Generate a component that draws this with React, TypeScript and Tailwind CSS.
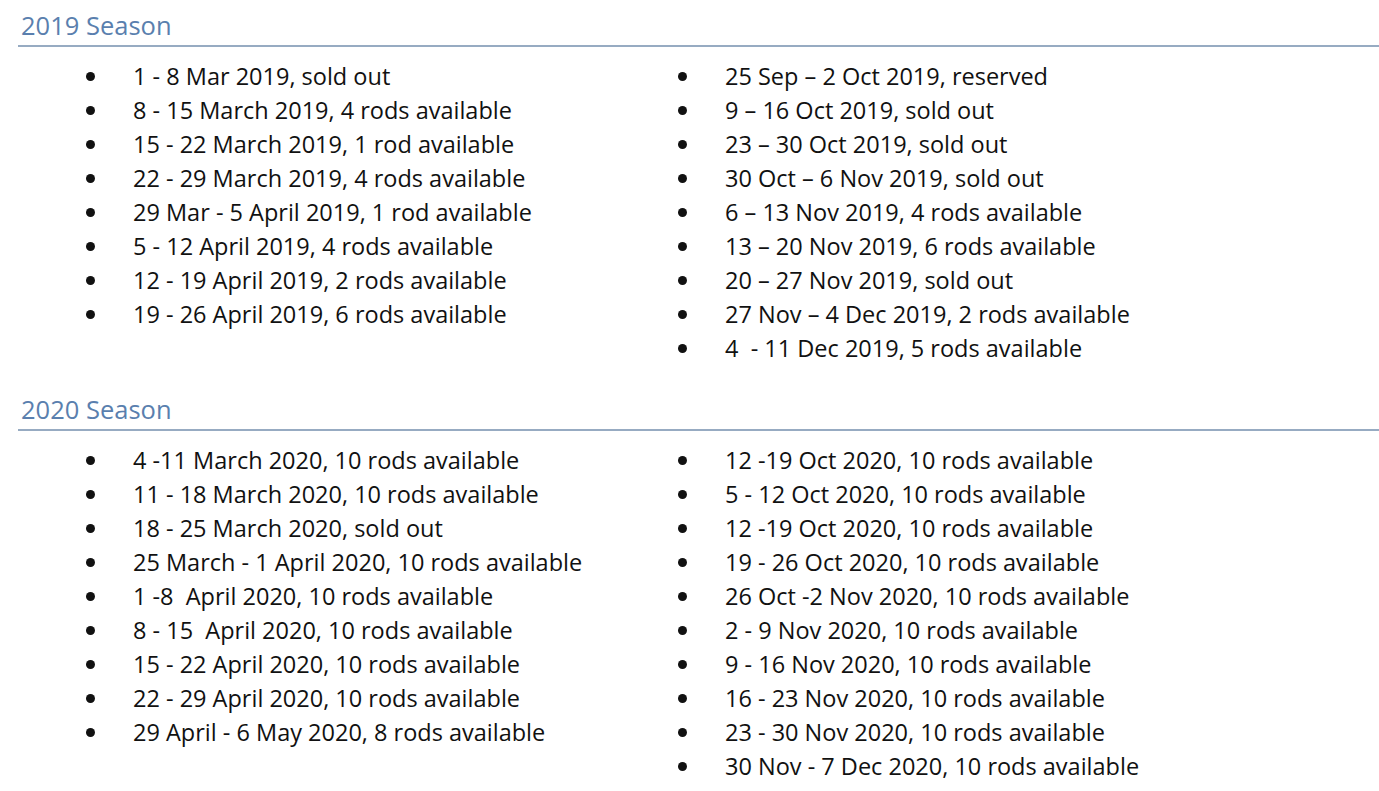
import React from "react";

const season2019Left = [
  "1 - 8 Mar 2019, sold out",
  "8 - 15 March 2019, 4 rods available",
  "15 - 22 March 2019, 1 rod available",
  "22 - 29 March 2019, 4 rods available",
  "29 Mar - 5 April 2019, 1 rod available",
  "5 - 12 April 2019, 4 rods available",
  "12 - 19 April 2019, 2 rods available",
  "19 - 26 April 2019, 6 rods available",
];

const season2019Right = [
  "25 Sep \u2013 2 Oct 2019, reserved",
  "9 \u2013 16 Oct 2019, sold out",
  "23 \u2013 30 Oct 2019, sold out",
  "30 Oct \u2013 6 Nov 2019, sold out",
  "6 \u2013 13 Nov 2019, 4 rods available",
  "13 \u2013 20 Nov 2019, 6 rods available",
  "20 \u2013 27 Nov 2019, sold out",
  "27 Nov \u2013 4 Dec 2019, 2 rods available",
  "4 \u00a0- 11 Dec 2019, 5 rods available",
];

const season2020Left = [
  "4 -11 March 2020, 10 rods available",
  "11 - 18 March 2020, 10 rods available",
  "18 - 25 March 2020, sold out",
  "25 March - 1 April 2020, 10 rods available",
  "1 -8 \u00a0April 2020, 10 rods available",
  "8 - 15 \u00a0April 2020, 10 rods available",
  "15 - 22 April 2020, 10 rods available",
  "22 - 29 April 2020, 10 rods available",
  "29 April - 6 May 2020, 8 rods available",
];

const season2020Right = [
  "12 -19 Oct 2020, 10 rods available",
  "5 - 12 Oct 2020, 10 rods available",
  "12 -19 Oct 2020, 10 rods available",
  "19 - 26 Oct 2020, 10 rods available",
  "26 Oct -2 Nov 2020, 10 rods available",
  "2 - 9 Nov 2020, 10 rods available",
  "9 - 16 Nov 2020, 10 rods available",
  "16 - 23 Nov 2020, 10 rods available",
  "23 - 30 Nov 2020, 10 rods available",
  "30 Nov - 7 Dec 2020, 10 rods available",
];

function Column({ items }: { items: string[] }) {
  return (
    <ul className="flex flex-col">
      {items.map((t, i) => (
        <li key={i} className="flex h-[34px] items-center">
          <span className="flex w-[133px] shrink-0 items-center pl-[86px]">
            <span className="block h-[9px] w-[9px] rounded-full bg-[#111]" />
          </span>
          <span className="whitespace-pre text-[23.5px] leading-[34px] text-[#111]">{t}</span>
        </li>
      ))}
    </ul>
  );
}

function Season({
  title,
  left,
  right,
  className,
}: {
  title: string;
  left: string[];
  right: string[];
  className?: string;
}) {
  return (
    <section className={className}>
      <div className="ml-[18px] border-b-2 border-[#97abc2] pb-[5px] pt-[10px]">
        <h2 className="pl-[3px] text-[25.5px] font-normal leading-[30px] text-[#5a7fae]">{title}</h2>
      </div>
      <div className="mt-[12px] grid grid-cols-[592px_1fr]">
        <Column items={left} />
        <Column items={right} />
      </div>
    </section>
  );
}

export default function App() {
  return (
    <div
      className="min-h-[791px] w-[1379px] bg-white"
      style={{ fontFamily: '"Open Sans", "Noto Sans", sans-serif' }}
    >
      <Season title="2019 Season" left={season2019Left} right={season2019Right} />
      <Season
        title="2020 Season"
        left={season2020Left}
        right={season2020Right}
        className="mt-[19px]"
      />
    </div>
  );
}
